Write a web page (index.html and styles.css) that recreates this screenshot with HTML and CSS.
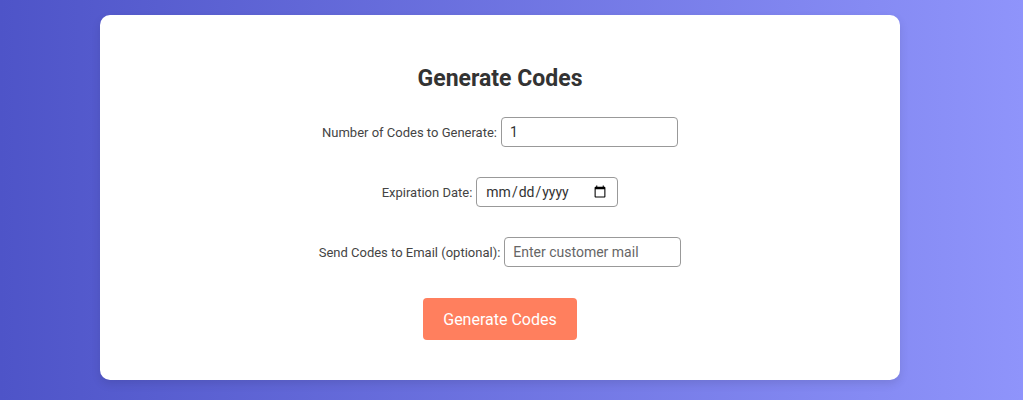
FILE: index.html
```html
<!DOCTYPE html>
<html lang="en">
<head>
<meta charset="utf-8">
<title>Generate Codes</title>
<link rel="stylesheet" href="styles.css">
</head>
<body>
<div class="card">
  <h2 class="title">Generate Codes</h2>
  <form class="form">
    <div class="row">
      <label class="label" for="count">Number of Codes to Generate:</label>
      <input class="field field-wide" id="count" type="number" value="1">
    </div>
    <div class="row">
      <label class="label" for="exp">Expiration Date:</label>
      <input class="field" id="exp" type="date">
    </div>
    <div class="row">
      <label class="label" for="mail">Send Codes to Email (optional):</label>
      <input class="field field-wide" id="mail" type="email" placeholder="Enter customer mail">
    </div>
    <div class="actions">
      <button class="btn" type="button">Generate Codes</button>
    </div>
  </form>
</div>
</body>
</html>
```
FILE: styles.css
```css
html, body {
  margin: 0;
  height: 100%;
}
body {
  background: linear-gradient(to right, #4e54c8, #8f94fb);
  font-family: Roboto, "Liberation Sans", sans-serif;
  padding: 15px 0 0 100px;
  box-sizing: border-box;
}
.card {
  width: 800px;
  background: #fff;
  border-radius: 10px;
  box-shadow: 0 4px 10px rgba(0, 0, 0, 0.1);
  padding: 40px 0;
  box-sizing: border-box;
  text-align: center;
}
.title {
  margin: 10px 0 24px;
  font-size: 23px;
  line-height: 28px;
  font-weight: 700;
  color: #333;
}
.row {
  display: flex;
  justify-content: center;
  align-items: center;
  gap: 4px;
  margin-bottom: 30px;
}
.label {
  font-size: 13px;
  color: #444;
}
.field {
  font-family: Roboto, "Liberation Sans", sans-serif;
  font-size: 14px;
  color: #333;
  padding: 0 8px;
  height: 30px;
  box-sizing: border-box;
  border: 1px solid #999;
  border-radius: 4px;
  background: #fff;
}
.field-wide {
  width: 177px;
}
.field::placeholder {
  color: #666;
}
.actions {
  display: flex;
  justify-content: center;
  padding-top: 1px;
}
.btn {
  font-family: Roboto, "Liberation Sans", sans-serif;
  font-size: 16px;
  color: #fff;
  background: #ff7f5e;
  border: none;
  border-radius: 4px;
  height: 42px;
  padding: 0 20px;
  cursor: pointer;
}
```
